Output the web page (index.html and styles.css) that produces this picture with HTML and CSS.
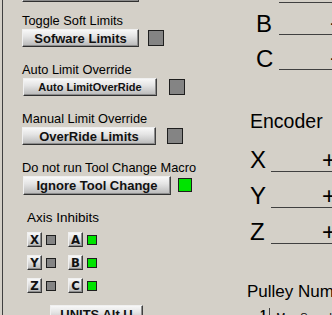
FILE: index.html
```html
<!DOCTYPE html>
<html lang="en">
<head>
  <meta charset="UTF-8">
  <title>Limits and Encoders</title>
  <link rel="stylesheet" href="styles.css">
</head>
<body>
  <div class="screen">
    <!-- left panel: limit toggles -->
    <div class="left">
      <div class="btn stub"></div>

      <div class="group first">
        <div class="label">Toggle Soft Limits</div>
        <div class="row">
          <button class="btn btn-soft">Sofware Limits</button>
          <span class="led led-soft"></span>
        </div>
      </div>

      <div class="group">
        <div class="label">Auto Limit Override</div>
        <div class="row">
          <button class="btn btn-auto">Auto LimitOverRide</button>
          <span class="led led-auto"></span>
        </div>
      </div>

      <div class="group">
        <div class="label">Manual Limit Override</div>
        <div class="row">
          <button class="btn btn-manual">OverRide Limits</button>
          <span class="led led-manual"></span>
        </div>
      </div>

      <div class="group">
        <div class="label">Do not run Tool Change Macro</div>
        <div class="row">
          <button class="btn btn-tool">Ignore Tool Change</button>
          <span class="led led-tool on"></span>
        </div>
      </div>

      <div class="axis-title">Axis Inhibits</div>
      <div class="axis-grid">
        <div class="axis"><button class="btn mini">X</button><span class="led small"></span></div>
        <div class="axis"><button class="btn mini">A</button><span class="led small on"></span></div>
        <div class="axis"><button class="btn mini">Y</button><span class="led small"></span></div>
        <div class="axis"><button class="btn mini">B</button><span class="led small on"></span></div>
        <div class="axis"><button class="btn mini">Z</button><span class="led small"></span></div>
        <div class="axis"><button class="btn mini">C</button><span class="led small on"></span></div>
      </div>

      <button class="btn btn-units">UNITS Alt U</button>
    </div>

    <!-- right panel: DRO readouts -->
    <div class="right">
      <div class="topline"></div>
      <div class="dro dro-b">
        <span class="letter">B</span>
        <span class="value">+0.0000</span>
      </div>
      <div class="dro dro-c">
        <span class="letter">C</span>
        <span class="value">+0.0000</span>
      </div>

      <div class="heading">Encoder</div>
      <div class="dro enc">
        <span class="letter">X</span>
        <span class="value">+0.0000</span>
      </div>
      <div class="dro enc">
        <span class="letter">Y</span>
        <span class="value">+0.0000</span>
      </div>
      <div class="dro enc">
        <span class="letter">Z</span>
        <span class="value">+0.0000</span>
      </div>

      <div class="pulley">Pulley Number</div>
      <div class="pulley-row">
        <span class="pulley-num">1</span>
        <span class="pulley-cell">Max Speed</span>
      </div>
    </div>
  </div>
</body>
</html>
```

FILE: styles.css
```css
html, body {
  margin: 0;
  padding: 0;
}
body {
  background-color: #d4d0c8;
  font-family: "Liberation Sans", Arial, sans-serif;
  color: #000;
  overflow: hidden;
}
.screen {
  display: flex;
  width: 332px;
  height: 315px;
  overflow: hidden;
}

/* left panel */
.left {
  flex: none;
  width: 225px;
  height: 315px;
  margin-left: 2px;
  padding-left: 19px;
  border-left: 1px solid #404040;
}
.btn {
  box-sizing: border-box;
  display: block;
  height: 18px;
  padding: 0;
  border: 1px solid;
  border-color: #f0f0f0 #404040 #303030 #f0f0f0;
  background: linear-gradient(#f8f8f8, #e4e4e4 40%, #b8b8b8);
  box-shadow: inset -1px -1px 0 #8c8c8c;
  font-family: "Liberation Sans", Arial, sans-serif;
  font-weight: bold;
  font-size: 13px;
  color: #111;
  line-height: 15px;
  text-align: center;
  cursor: pointer;
}
.stub {
  width: 117px;
  margin-top: -16px;
}
.group {
  height: 49px;
}
.group.first {
  margin-top: 11px;
}
.label {
  font-size: 12.8px;
  line-height: 15px;
  height: 15px;
  white-space: nowrap;
}
.row {
  display: flex;
  align-items: center;
  margin-top: 1px;
  height: 18px;
}
.btn-soft {
  width: 117px;
}
.btn-auto {
  width: 134px;
  margin-left: 1px;
  font-size: 11px;
}
.btn-manual {
  width: 134px;
}
.btn-tool {
  width: 148px;
  margin-left: 1px;
  height: 19px;
}
.led {
  box-sizing: border-box;
  display: block;
  width: 16px;
  height: 16px;
  border: 1px solid #1e1e1e;
  background-color: #848484;
}
.led.on {
  background-color: #00e400;
}
.led-soft {
  margin-left: 9px;
}
.led-auto {
  margin-left: 12px;
}
.led-manual {
  margin-left: 11px;
}
.led-tool {
  width: 14px;
  height: 14px;
  margin-left: 7px;
}

.axis-title {
  margin-top: 1px;
  margin-left: 5px;
  font-size: 13.5px;
  line-height: 16px;
}
.axis-grid {
  display: grid;
  grid-template-columns: 30px 30px;
  column-gap: 11px;
  row-gap: 8px;
  margin-top: 6px;
  margin-left: 5px;
}
.axis {
  display: flex;
  align-items: center;
  gap: 4px;
}
.mini {
  width: 15px;
  height: 15px;
  font-family: "DejaVu Sans Condensed", "Liberation Sans", sans-serif;
  font-weight: bold;
  font-size: 13px;
  line-height: 13px;
}
.led.small {
  width: 10px;
  height: 10px;
}
.btn-units {
  width: 93px;
  margin-top: 12px;
  margin-left: 28px;
}

/* right panel */
.right {
  flex: none;
  width: 85px;
  overflow: visible;
}
.topline {
  margin-top: 2px;
  margin-left: 32px;
  width: 200px;
  border-top: 1px solid #404040;
}
.dro {
  display: flex;
  box-sizing: border-box;
  white-space: nowrap;
}
.letter,
.value {
  box-sizing: border-box;
  font-size: 24px;
  line-height: 24px;
}
.letter {
  flex: none;
}
.value {
  flex: none;
  width: 150px;
  padding-left: 51px;
  border-bottom: 1px solid #404040;
}
.dro-b {
  height: 32px;
  padding-left: 9px;
}
.dro-c {
  height: 35px;
  padding-left: 9px;
}
.dro-b .letter,
.dro-c .letter {
  width: 23px;
}
.dro-b .letter,
.dro-b .value {
  padding-top: 9px;
}
.dro-c .letter,
.dro-c .value {
  padding-top: 12px;
}
.heading {
  margin-top: 41px;
  padding-left: 3px;
  font-size: 19.5px;
  line-height: 20px;
  white-space: nowrap;
}
.enc {
  height: 36px;
  padding-left: 3px;
}
.heading + .enc {
  margin-top: 5px;
}
.enc .letter {
  width: 21px;
}
.enc .letter,
.enc .value {
  padding-top: 12px;
}
.pulley {
  margin-top: 38px;
  font-size: 17px;
  line-height: 20px;
  white-space: nowrap;
}
.pulley-row {
  display: flex;
  margin-top: 6px;
  white-space: nowrap;
  font-size: 11px;
  line-height: 14px;
}
.pulley-num {
  width: 11px;
  padding-left: 13px;
  font-weight: bold;
  font-size: 12px;
}
.pulley-cell {
  padding-left: 6px;
  padding-top: 2px;
  border-left: 1px solid #404040;
}
```
